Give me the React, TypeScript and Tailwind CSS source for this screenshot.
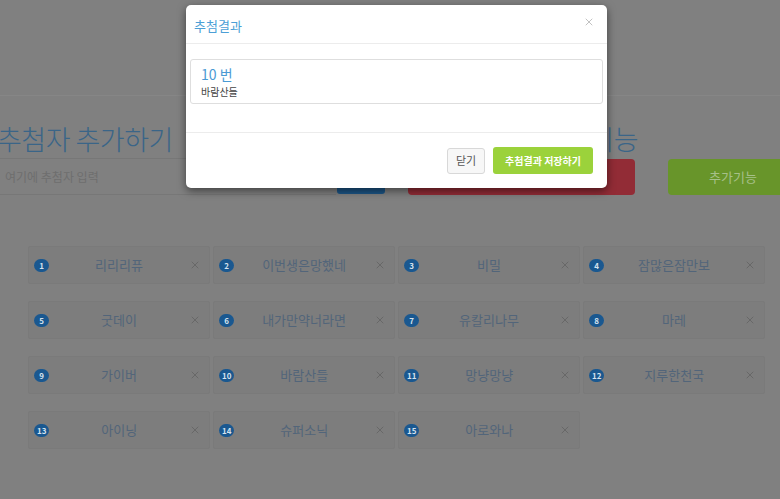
import { X } from 'lucide-react'

interface Entry {
  no: number
  name: string
}

const entries: Entry[] = [
  { no: 1, name: '리리리퓨' },
  { no: 2, name: '이번생은망했네' },
  { no: 3, name: '비밀' },
  { no: 4, name: '잠많은잠만보' },
  { no: 5, name: '굿데이' },
  { no: 6, name: '내가만약너라면' },
  { no: 7, name: '유칼리나무' },
  { no: 8, name: '마레' },
  { no: 9, name: '가이버' },
  { no: 10, name: '바람산들' },
  { no: 11, name: '망냥망냥' },
  { no: 12, name: '지루한천국' },
  { no: 13, name: '아이닝' },
  { no: 14, name: '슈퍼소닉' },
  { no: 15, name: '아로와나' },
]

function EntryCard({ entry }: { entry: Entry }) {
  return (
    <div className="h-[38px] flex items-center pl-[5px] pr-[8px] bg-[#7d7d7d] border border-[#7a7a7a] rounded-[2px]">
      <span className="min-w-[15px] h-[13px] px-[3px] rounded-full bg-[#1a5890] text-[#d6e2ee] text-[8px] font-bold leading-[13px] text-center">
        {entry.no}
      </span>
      <span className="flex-1 text-center text-[13px] text-[#52657a]">{entry.name}</span>
      <X className="w-[12px] h-[12px] text-[#686868]" strokeWidth={2} />
    </div>
  )
}

export default function App() {
  return (
    <div
      className="relative w-[780px] h-[499px] overflow-hidden bg-[#808080]"
      style={{ fontFamily: '"Noto Sans CJK KR", "Noto Sans", sans-serif' }}
    >
      <div className="h-[96px] border-b border-[#868686]" />

      <div className="flex items-start ml-[-3px] pt-[26px]">
        <div className="w-[388px] shrink-0">
          <h2 className="text-[27px] leading-[34px] tracking-[-0.5px] font-light text-[#3a6588] whitespace-nowrap">
            추첨자 추가하기
          </h2>
          <div className="flex mt-[2px]">
            <div className="flex-1 h-[37px] border-y border-[#777] flex items-center pl-[8px] text-[12px] text-[#6e6e6e]">
              여기에 추첨자 입력
            </div>
            <div className="w-[48px] h-[36px] ml-[1px] rounded-[3px] bg-[#1c5586]" />
          </div>
        </div>

        <div className="w-[227px] shrink-0 ml-[23px]">
          <h2 className="text-[27px] leading-[34px] tracking-[-0.5px] font-light text-[#3a6588] whitespace-nowrap">
            추첨하기 및 부가기능
          </h2>
          <div className="mt-[3px] h-[36px] rounded-[4px] bg-[#922c36]" />
        </div>

        <div className="w-[130px] shrink-0 ml-[33px] pt-[37px]">
          <div className="h-[36px] rounded-[4px] bg-[#68952a] flex items-center justify-center text-[13px] text-[#a6c089]">
            추가기능
          </div>
        </div>
      </div>

      <div className="ml-[28px] mt-[51px] grid grid-cols-[repeat(4,182px)] gap-x-[3px] gap-y-[17px]">
        {entries.map((entry) => (
          <EntryCard key={entry.no} entry={entry} />
        ))}
      </div>

      {/* 추첨결과 modal */}
      <div className="absolute left-[186px] top-[5px] w-[421px] bg-white rounded-[5px] shadow-[0_3px_9px_rgba(0,0,0,0.5)]">
        <div className="h-[39px] flex items-center justify-between pl-[8px] pr-[12px] pt-[4px] border-b border-[#ececec]">
          <span className="text-[13px] text-[#4c9fd6]">추첨결과</span>
          <X className="w-[12px] h-[12px] text-[#c2c2c2] -mt-[8px]" strokeWidth={2} />
        </div>
        <div className="px-[4px] pt-[15px] pb-[28px]">
          <div className="h-[45px] border border-[#dedede] rounded-[3px] pl-[10px] pt-[5px]">
            <div className="text-[14px] leading-[19px] text-[#4a9ad4]">10 번</div>
            <div className="text-[10px] leading-[15px] text-[#444]">바람산들</div>
          </div>
        </div>
        <div className="h-[56px] border-t border-[#ececec] flex items-center justify-end gap-[8px] pr-[14px]">
          <button className="w-[38px] h-[26px] rounded-[3px] border border-[#d8d8d8] bg-[#f7f7f7] text-[11px] text-[#555]">
            닫기
          </button>
          <button className="w-[100px] h-[27px] rounded-[3px] bg-[#9bd23b] text-[10px] font-bold text-white">
            추첨결과 저장하기
          </button>
        </div>
      </div>
    </div>
  )
}
